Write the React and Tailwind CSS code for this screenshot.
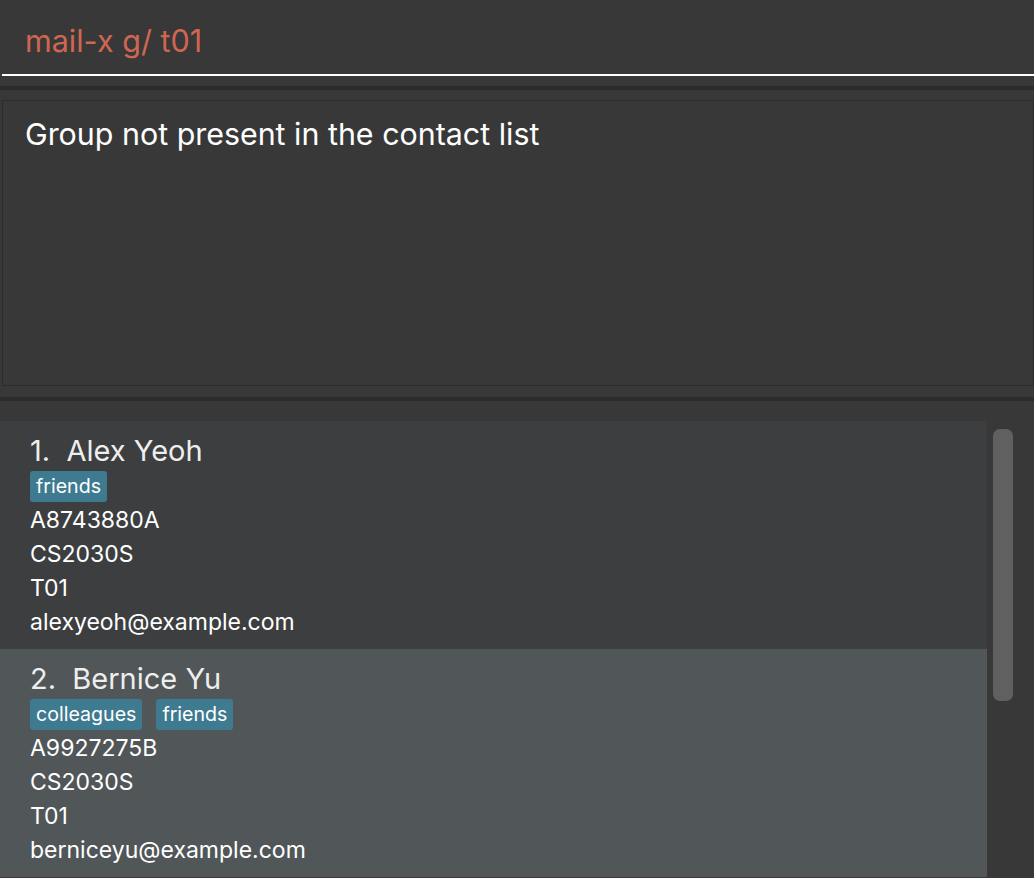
export default function App() {
  const people = [
    { n: 1, name: "Alex Yeoh", tags: ["friends"], id: "A8743880A", mod: "CS2030S", tut: "T01", email: "alexyeoh@example.com", bg: "bg-[#3c3e3f]" },
    { n: 2, name: "Bernice Yu", tags: ["colleagues", "friends"], id: "A9927275B", mod: "CS2030S", tut: "T01", email: "berniceyu@example.com", bg: "bg-[#515658]" },
  ];
  return (
    <div className="w-[1034px] h-[878px] bg-[#383838] flex flex-col overflow-hidden" style={{ fontFamily: "Inter, 'Liberation Sans', sans-serif" }}>
      <div className="h-[76px] ml-[2px] border-b-2 border-white flex items-center pl-[23px] pt-[8px]">
        <span className="text-[30.5px] text-[#d06651]">mail-x g/ t01</span>
      </div>
      <div className="h-[10px]" />
      <div className="h-[4px] bg-[#2b2b2b]" />
      <div className="h-[10px]" />
      <div className="h-[286px] ml-[2px] border border-[#2b2b2b] pl-[22px] pt-[11px]">
        <div className="text-[30.4px] text-white">Group not present in the contact list</div>
      </div>
      <div className="h-[11px]" />
      <div className="h-[4px] bg-[#2b2b2b]" />
      <div className="h-[20px]" />
      <div className="flex flex-1 min-h-0">
        <div className="w-[987px] flex flex-col">
          {people.map((p) => (
            <div key={p.n} className={`${p.bg} h-[228px] pl-[30px] pt-[13px] flex flex-col`}>
              <div className="text-[29px] text-[#eeeeee] leading-[34px]">
                {p.n}.&nbsp;&nbsp;{p.name}
              </div>
              <div className="flex gap-[14px] mt-[3px] mb-[1px]">
                {p.tags.map((t) => (
                  <span key={t} className="bg-[#3e7b91] text-white text-[19.6px] leading-[31px] px-[6px] rounded-[3px]">{t}</span>
                ))}
              </div>
              {[p.id, p.mod, p.tut, p.email].map((l, i) => (
                <div key={i} className="text-[23px] text-white leading-[34px]">{l}</div>
              ))}
            </div>
          ))}
        </div>
        <div className="flex-1 pl-[6px] pt-[8px]">
          <div className="w-[20px] h-[272px] bg-[#606060] rounded-[7px]" />
        </div>
      </div>
    </div>
  );
}
